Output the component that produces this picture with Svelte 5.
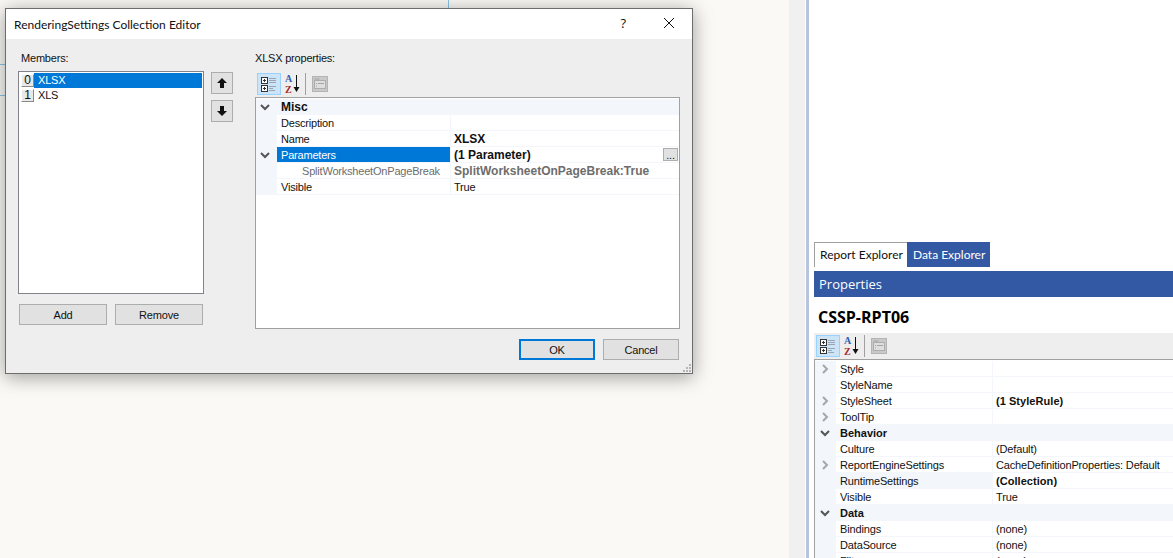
<script>
  let members = [
    {index: 0, name: 'XLSX', selected: true},
    {index: 1, name: 'XLS'}
  ];

  let dialogRows = [
    {type: 'group', name: 'Misc'},
    {name: 'Description', value: ''},
    {name: 'Name', value: 'XLSX', bold: true},
    {name: 'Parameters', value: '(1 Parameter)', bold: true, selected: true, open: true, more: true},
    {name: 'SplitWorksheetOnPageBreak', value: 'SplitWorksheetOnPageBreak:True', bold: true, child: true},
    {name: 'Visible', value: 'True'}
  ];

  let panelRows = [
    {name: 'Style', value: '', closed: true},
    {name: 'StyleName', value: ''},
    {name: 'StyleSheet', value: '(1 StyleRule)', bold: true, closed: true},
    {name: 'ToolTip', value: '', closed: true},
    {type: 'group', name: 'Behavior'},
    {name: 'Culture', value: '(Default)'},
    {name: 'ReportEngineSettings', value: 'CacheDefinitionProperties: Default', closed: true},
    {name: 'RuntimeSettings', value: '(Collection)', bold: true, tinted: true},
    {name: 'Visible', value: 'True'},
    {type: 'group', name: 'Data'},
    {name: 'Bindings', value: '(none)'},
    {name: 'DataSource', value: '(none)'},
    {name: 'Filters', value: '(none)'}
  ];
</script>

{#snippet toolbar()}
  <div class="tool active">
    <svg width="16" height="15" viewBox="0 0 16 15">
      <g fill="#fff" stroke="#333">
        <rect x="0.5" y="0.5" width="6" height="6" />
        <rect x="0.5" y="8.5" width="6" height="6" />
      </g>
      <path d="M2 3.500h3M3.500 2v3M2 11.500h3M3.500 10v3" stroke="#333" />
      <path d="M8 1.500h7M8 3.500h7M8 5.500h7M8 9.500h7M8 11.500h4M8 13.500h6" stroke="#9aa5b1" />
    </svg>
  </div>
  <div class="tool">
    <svg width="16" height="20" viewBox="0 0 16 20">
      <text x="0" y="8" class="az" fill="#2f5fb0">A</text>
      <text x="0" y="19" class="az" fill="#a5282c">Z</text>
      <path d="M11.500 1v15" stroke="#111" />
      <path d="M8.500 13h6l-3 5z" fill="#111" />
    </svg>
  </div>
  <span class="tool-sep"></span>
  <div class="tool pages">
    <svg width="16" height="16" viewBox="0 0 16 16">
      <rect x="0.500" y="0.500" width="15" height="15" fill="#c9c9c9" stroke="#b4b4b4" />
      <rect x="2.500" y="4.500" width="11" height="8" fill="#dedede" stroke="#adadad" />
      <path d="M2.500 3h5M4 7.500h1M6 7.500h6M4 10h1" stroke="#a4a4a4" />
    </svg>
  </div>
{/snippet}

{#snippet chevron(open)}
  <svg width="10" height="10" viewBox="0 0 10 10" fill="none" stroke-width="2">
    {#if open}
      <path d="M1 3l4 4 4-4" stroke="#555" />
    {:else}
      <path d="M3 1l4 4-4 4" stroke="#a6a6a6" />
    {/if}
  </svg>
{/snippet}

<div class="page">
  <div class="canvas">
    <span class="guide h1"></span>
    <span class="guide h2"></span>
    <span class="guide v1"></span>

    <div class="dialog">
      <div class="titlebar">
        <span class="title">RenderingSettings Collection Editor</span>
        <span class="help">?</span>
        <svg class="close" width="12" height="12" viewBox="0 0 12 12">
          <path d="M1 1l10 10M11 1L1 11" stroke="#111" stroke-width="1" fill="none" />
        </svg>
      </div>

      <div class="client">
        <div class="columns">
          <div class="members">
            <div class="label">Members:</div>
            <div class="listbox">
              {#each members as m}
                <div class="member">
                  <span class="idx">{m.index}</span>
                  <span class="mname" class:sel={m.selected}>{m.name}</span>
                </div>
              {/each}
            </div>
            <div class="member-actions">
              <button>Add</button>
              <button>Remove</button>
            </div>
          </div>

          <div class="order">
            <button class="arrow" aria-label="Move up">
              <svg width="12" height="12" viewBox="0 0 12 12"><path d="M6 1l5 5H8v5H4V6H1z" fill="#111" /></svg>
            </button>
            <button class="arrow" aria-label="Move down">
              <svg width="12" height="12" viewBox="0 0 12 12"><path d="M6 11L1 6h3V1h4v5h3z" fill="#111" /></svg>
            </button>
          </div>

          <div class="props">
            <div class="label">XLSX properties:</div>
            <div class="toolbar">{@render toolbar()}</div>
            <div class="pg">
              {#each dialogRows as r}
                {#if r.type === 'group'}
                  <div class="row group">
                    <span class="gutter">{@render chevron(true)}</span>
                    <span class="gname">{r.name}</span>
                  </div>
                {:else}
                  <div class="row">
                    <span class="gutter">{#if r.open}{@render chevron(true)}{/if}</span>
                    <span class="name" class:sel={r.selected} class:child={r.child}>{r.name}</span>
                    <span class="value" class:strong={r.bold} class:child={r.child}>{r.value}</span>
                    {#if r.more}<span class="more">...</span>{/if}
                  </div>
                {/if}
              {/each}
            </div>
          </div>
        </div>

        <div class="footer">
          <button class="ok">OK</button>
          <button>Cancel</button>
        </div>

        <svg class="grip" width="9" height="9" viewBox="0 0 9 9" fill="#b5b5b5">
          <rect x="6" y="0" width="2" height="2" />
          <rect x="3" y="3" width="2" height="2" />
          <rect x="6" y="3" width="2" height="2" />
          <rect x="0" y="6" width="2" height="2" />
          <rect x="3" y="6" width="2" height="2" />
          <rect x="6" y="6" width="2" height="2" />
        </svg>
      </div>
    </div>
  </div>

  <div class="strip"></div>
  <div class="divider"></div>

  <div class="panel">
    <div class="tabs">
      <span class="tab">Report Explorer</span>
      <span class="tab on">Data Explorer</span>
    </div>
    <div class="panel-head">Properties</div>
    <div class="object">CSSP-RPT06</div>
    <div class="toolbar wide">{@render toolbar()}</div>
    <div class="pg wide">
      {#each panelRows as r}
        {#if r.type === 'group'}
          <div class="row group">
            <span class="gutter">{@render chevron(true)}</span>
            <span class="gname">{r.name}</span>
          </div>
        {:else}
          <div class="row">
            <span class="gutter">{#if r.closed}{@render chevron(false)}{/if}</span>
            <span class="name" class:tinted={r.tinted}>{r.name}</span>
            <span class="value" class:strong={r.bold}>{r.value}</span>
          </div>
        {/if}
      {/each}
    </div>
  </div>
</div>

<style>
  :global(body) {
    margin: 0;
    background: #fff;
  }

  .page {
    display: flex;
    width: 1173px;
    height: 558px;
    overflow: hidden;
    font-family: "Liberation Sans", Arial, sans-serif;
    font-size: 11px;
    letter-spacing: -0.2px;
    color: #111;
  }

  .canvas {
    position: relative;
    width: 789px;
    flex: none;
    background: #faf9f5;
  }

  .guide {
    position: absolute;
    background: #8cc4e4;
  }
  .h1 { left: 0; top: 64px; width: 6px; height: 1px; }
  .h2 { left: 0; top: 95px; width: 6px; height: 1px; }
  .v1 { left: 448px; top: 0; width: 1px; height: 9px; }

  .strip {
    width: 17px;
    flex: none;
    background: #f0f0f0;
    border-right: 1px solid #fff;
    box-sizing: border-box;
  }

  .divider {
    width: 3px;
    flex: none;
    margin-right: 1px;
    background: #b8c4de;
  }

  /* dialog */
  .dialog {
    position: absolute;
    left: 5px;
    top: 8px;
    width: 688px;
    height: 366px;
    box-sizing: border-box;
    border: 1px solid #6d6d6d;
    background: #eee;
    box-shadow: 0 3px 18px rgba(0, 0, 0, 0.38);
    display: flex;
    flex-direction: column;
  }

  .titlebar {
    height: 30px;
    flex: none;
    background: #fff;
    display: flex;
    align-items: center;
    padding-left: 8px;
  }

  .title {
    flex: 1;
    font-family: "Lato", "Open Sans", sans-serif;
    font-size: 12px;
    letter-spacing: 0;
  }

  .help {
    font-family: "Open Sans", sans-serif;
    font-size: 13px;
    margin-right: 37px;
    padding-bottom: 2px;
  }

  .close {
    margin-right: 17px;
    margin-bottom: 2px;
  }

  .client {
    position: relative;
    flex: 1;
    padding: 12px 0 0 12px;
  }

  .columns {
    display: flex;
    align-items: flex-start;
  }

  .label {
    height: 20px;
    line-height: 14px;
    padding-left: 3px;
  }

  .members {
    width: 186px;
  }

  .listbox {
    height: 223px;
    box-sizing: border-box;
    border: 1px solid #82828a;
    background: #fff;
    padding: 1px;
  }

  .member {
    display: flex;
    height: 15px;
    line-height: 15px;
  }

  .idx {
    width: 13px;
    height: 13px;
    margin: 1px 0 0 1px;
    flex: none;
    box-sizing: border-box;
    background: #e8e8e8;
    border-right: 1px solid #8a8a8a;
    border-bottom: 1px solid #8a8a8a;
    border-top: 1px solid #fff;
    border-left: 1px solid #fff;
    font-size: 12px;
    line-height: 11px;
    text-align: center;
  }

  .mname {
    flex: 1;
    padding-left: 4px;
  }

  .sel {
    background: #0078d7;
    color: #fff;
  }

  .member-actions {
    display: flex;
    gap: 8px;
    margin: 10px 0 0 1px;
  }

  button {
    width: 88px;
    height: 21px;
    padding: 0;
    box-sizing: border-box;
    border: 1px solid #adadad;
    background: #e1e1e1;
    color: #111;
    font: inherit;
    letter-spacing: inherit;
    display: flex;
    align-items: center;
    justify-content: center;
  }

  .order {
    display: flex;
    flex-direction: column;
    gap: 6px;
    margin: 21px 0 0 7px;
  }

  .arrow {
    width: 22px;
    height: 22px;
  }

  .props {
    width: 425px;
    margin-left: 22px;
  }

  .props .label {
    padding-left: 0;
    height: 21px;
  }

  .toolbar {
    height: 25px;
    box-sizing: border-box;
    padding: 0 0 1px 2px;
    display: flex;
    align-items: center;
    background: #eee;
  }

  .tool {
    width: 24px;
    height: 22px;
    box-sizing: border-box;
    display: flex;
    align-items: center;
    justify-content: center;
  }

  .tool.active {
    background: #cce4f7;
    border: 1px solid #99d1ff;
  }

  .tool.pages {
    width: 22px;
    margin-left: 3px;
  }

  .tool-sep {
    width: 1px;
    height: 22px;
    background: #a0a0a0;
  }

  .az {
    font-family: "Liberation Serif", serif;
    font-size: 10px;
    font-weight: bold;
  }

  /* property grid */
  .pg {
    height: 232px;
    box-sizing: border-box;
    border: 1px solid #a0a0a0;
    background: #fff;
    padding-top: 1px;
  }

  .row {
    position: relative;
    display: flex;
    height: 16px;
    line-height: 17px;
    box-sizing: border-box;
    border-bottom: 1px solid #f3f6fb;
  }

  .gutter {
    width: 21px;
    flex: none;
    box-sizing: border-box;
    padding-right: 3px;
    background: #f3f6fb;
    display: flex;
    align-items: center;
    justify-content: center;
  }

  .name {
    width: 169px;
    flex: none;
    padding-left: 4px;
    border-right: 1px solid #f3f6fb;
    white-space: nowrap;
  }

  .name.child {
    padding-left: 25px;
    width: 148px;
    color: #6d6d6d;
  }

  .name.tinted {
    background: #f3f6fb;
  }

  .value {
    padding-left: 3px;
    white-space: nowrap;
  }

  .value.strong {
    font-weight: bold;
    font-size: 12px;
    letter-spacing: 0;
  }

  .value.child {
    color: #6d6d6d;
  }

  .group {
    background: #f3f6fb;
    border-bottom: none;
  }

  .gname {
    padding-left: 4px;
    font-weight: bold;
    font-size: 12px;
    letter-spacing: 0;
  }

  .more {
    position: absolute;
    right: 1px;
    top: 1px;
    width: 15px;
    height: 13px;
    box-sizing: border-box;
    border: 1px solid #adadad;
    background: #e1e1e1;
    line-height: 12px;
    text-align: center;
  }

  .footer {
    display: flex;
    justify-content: flex-end;
    gap: 8px;
    margin-top: 10px;
    padding-right: 13px;
  }

  .footer button {
    width: 76px;
  }

  .footer .ok {
    border: 2px solid #0078d7;
  }

  .grip {
    position: absolute;
    right: 0;
    bottom: 0;
  }

  /* right panel */
  .panel {
    flex: 1;
    min-width: 0;
    padding: 242px 0 0 4px;
    background: #fff;
    letter-spacing: -0.15px;
  }

  .tabs {
    display: flex;
    height: 25px;
    font-family: "Lato", "Open Sans", sans-serif;
    font-size: 12px;
    letter-spacing: 0;
    line-height: 23px;
  }

  .tab {
    box-sizing: border-box;
    width: 93px;
    padding-left: 5px;
    border-left: 1px solid #a0a0a0;
    border-top: 1px solid #a0a0a0;
    white-space: nowrap;
  }

  .tab.on {
    width: 83px;
    padding-left: 6px;
    border: none;
    line-height: 25px;
    background: #3358a4;
    color: #fff;
  }

  .panel-head {
    height: 26px;
    margin-top: 4px;
    padding-left: 5px;
    background: #3358a4;
    color: #fff;
    font-family: "Open Sans", sans-serif;
    font-size: 13px;
    letter-spacing: 0;
    line-height: 26px;
  }

  .object {
    height: 36px;
    padding-left: 4px;
    font-family: "Open Sans", sans-serif;
    font-size: 16px;
    font-weight: bold;
    letter-spacing: 0;
    line-height: 41px;
    color: #000;
  }

  .toolbar.wide {
    height: 26px;
    padding: 0 0 0 2px;
  }

  .pg.wide {
    height: auto;
    border-right: none;
    border-bottom: none;
    width: 400px;
  }

  .pg.wide .gutter {
    padding-right: 2px;
  }

  .pg.wide .name {
    width: 152px;
  }

  .pg.wide .value.strong {
    font-size: 11px;
    letter-spacing: 0.05px;
  }

  .pg.wide .gname {
    font-size: 11px;
  }
</style>
